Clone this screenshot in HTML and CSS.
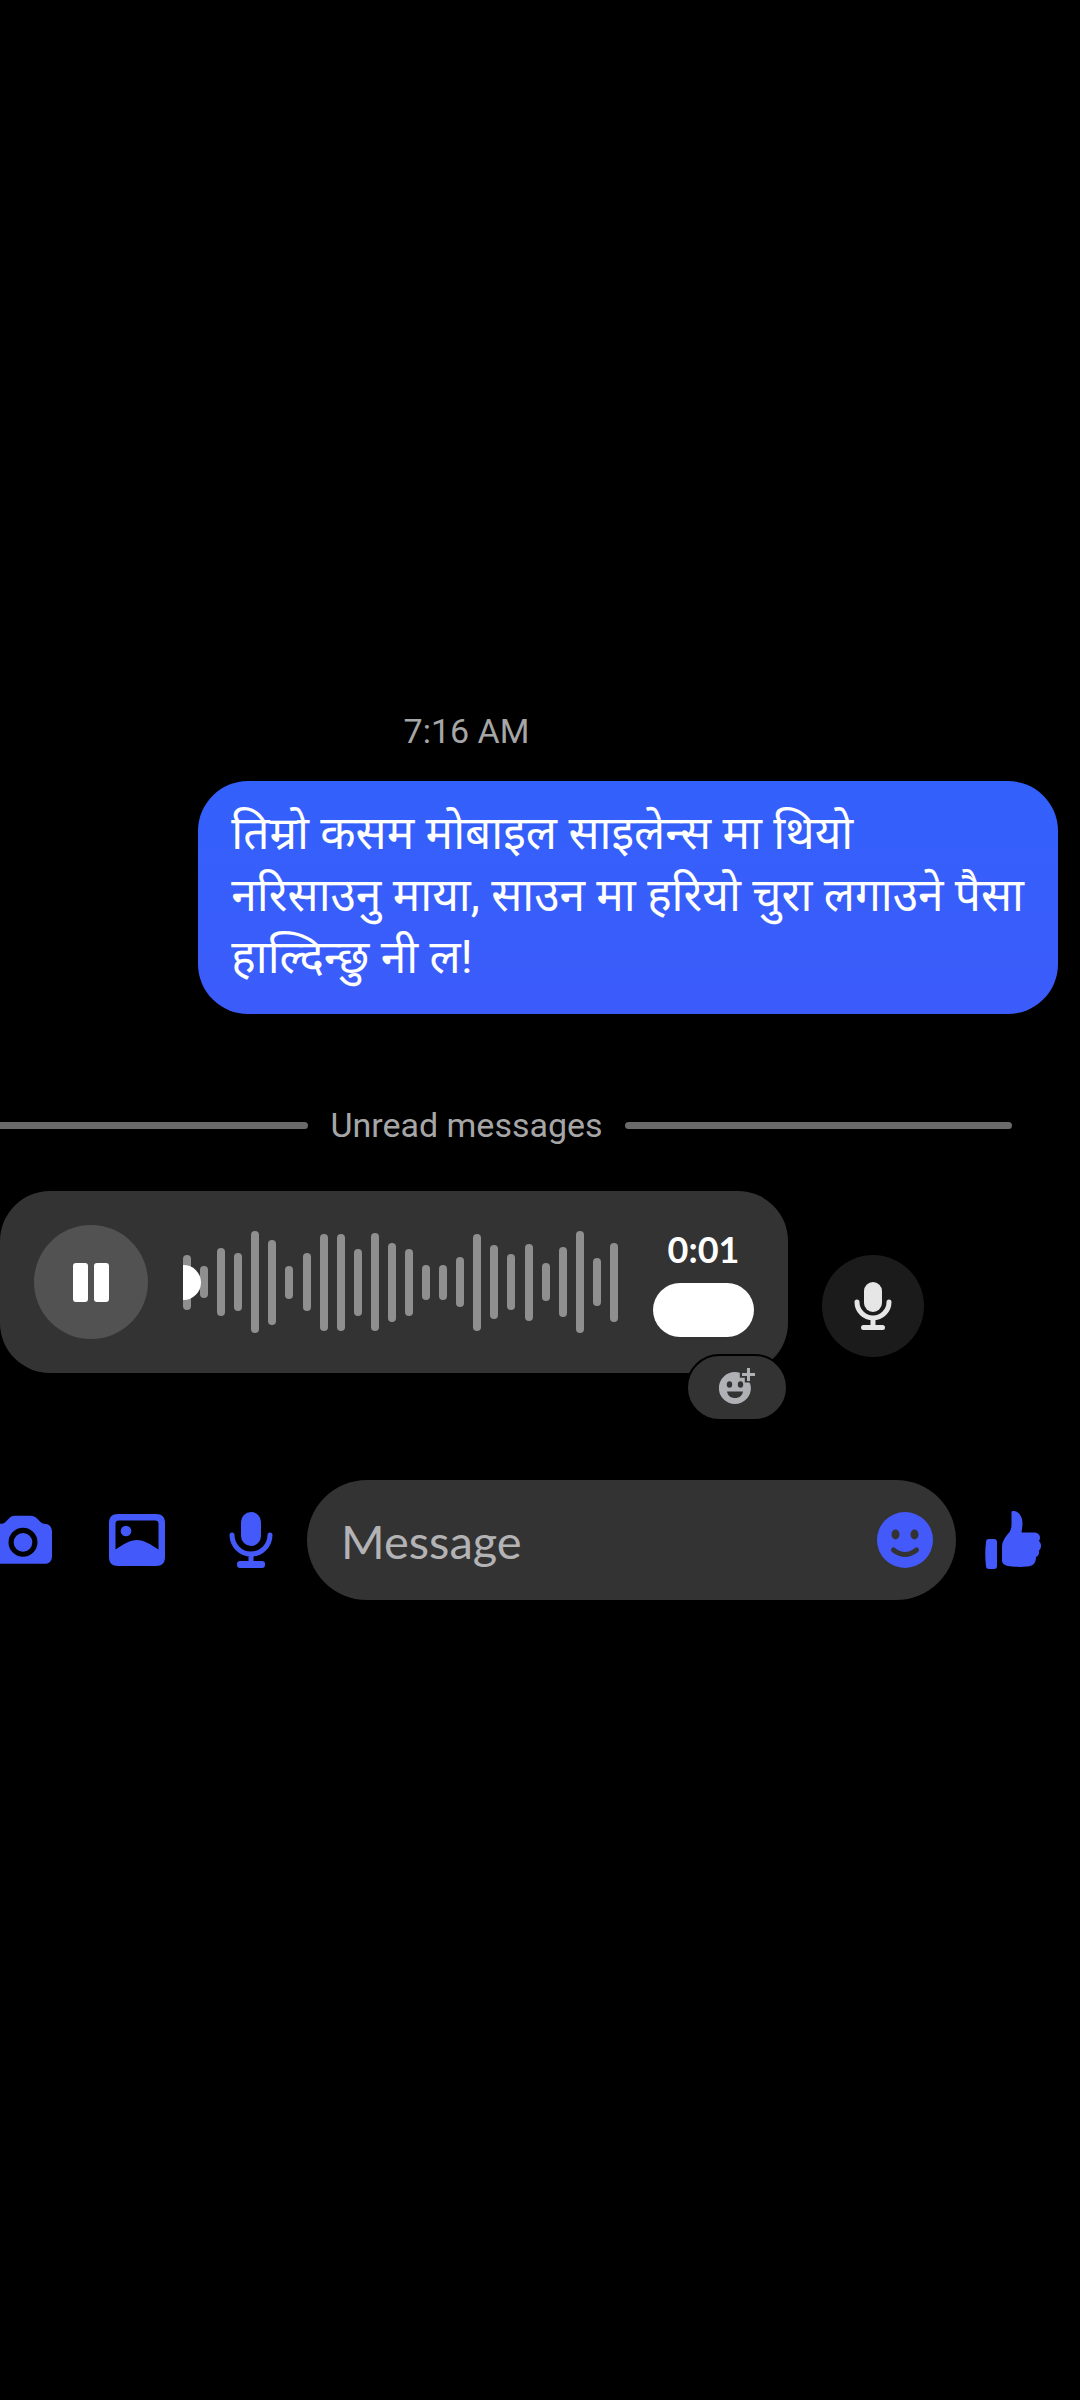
FILE: index.html
```html
<!DOCTYPE html>
<html lang="ne">
<head>
<meta charset="utf-8">
<meta name="viewport" content="width=device-width, initial-scale=1">
<title>Chat</title>
<link rel="stylesheet" href="styles.css">
</head>
<body>
<main class="chat">
  <div class="thread">
    <time class="stamp">7:16 AM</time>
    <p class="bubble">तिम्रो कसम मोबाइल साइलेन्स मा थियो<br>नरिसाउनु माया, साउन मा हरियो चुरा लगाउने पैसा<br>हाल्दिन्छु नी ल!</p>
    <div class="divider"><span>Unread messages</span></div>

    <div class="voice-row">
      <div class="voice">
        <button class="pause" aria-label="Pause"><i></i><i></i></button>
        <div class="wave">
          <span class="thumb"></span>
          <i style="height:55px"></i><i style="height:32px"></i><i style="height:68px"></i><i style="height:58px"></i><i style="height:102px"></i><i style="height:85px"></i><i style="height:33px"></i><i style="height:58px"></i><i style="height:97px"></i><i style="height:97px"></i><i style="height:67px"></i><i style="height:98px"></i><i style="height:79px"></i><i style="height:67px"></i><i style="height:35px"></i><i style="height:35px"></i><i style="height:50px"></i><i style="height:97px"></i><i style="height:74px"></i><i style="height:56px"></i><i style="height:77px"></i><i style="height:38px"></i><i style="height:70px"></i><i style="height:102px"></i><i style="height:48px"></i><i style="height:79px"></i>
        </div>
        <div class="meta">
          <span class="duration">0:01</span>
          <button class="speed" aria-label="Playback speed"></button>
        </div>
        <button class="react" aria-label="Add reaction">
          <svg width="36" height="36" viewBox="0 0 36 36">
            <path fill="#b0b1b5" d="M16 4c1.700 0 3.300.3 4.800.8v5h5v4.600h4.700c.9 1.800 1.400 3.600 1.400 5.600a16 16 0 1 1-15.900-16z"/>
            <path fill="none" stroke="#b0b1b5" stroke-width="3" d="M29.500 0v13M23 6.500h13"/>
            <g fill="#333"><ellipse cx="10.500" cy="16.500" rx="2.700" ry="3.200"/><ellipse cx="21.500" cy="16.500" rx="2.700" ry="3.200"/><path d="M8 23.500h16c-.8 4.500-4 6.500-8 6.500s-7.200-2-8-6.500z"/></g>
          </svg>
        </button>
      </div>
      <button class="transcribe" aria-label="Reply with voice">
        <svg width="38" height="48" viewBox="0 0 38 48" fill="#e6e6e6">
          <rect x="10" y="0" width="18" height="30" rx="9"/>
          <path d="M3 20a16 16 0 0 0 32 0M19 36v8M9.500 45.500h19" fill="none" stroke="#e6e6e6" stroke-width="5" stroke-linecap="round"/>
        </svg>
      </button>
    </div>
  </div>

  <form class="composer">
    <button type="button" class="tool" aria-label="Camera">
      <svg width="62" height="52" viewBox="0 0 62 52">
        <path fill="#4459fa" fill-rule="evenodd" d="M22 0h17c3 0 5 1 7 3l4 4c1 1 2 1.500 3.500 1.500 5 0 8.500 3.500 8.500 8.500v26c0 5.500-3 8.500-8.500 8.500h-45C3 51.500 0 48.500 0 43V17c0-5 3.500-8.500 8.500-8.500 1.500 0 2.500-.5 3.500-1.500l4-4c2-2 3-3 6-3zM31 13a15.500 15.500 0 1 0 0 31 15.500 15.500 0 0 0 0-31zm0 5.500a10 10 0 1 1 0 20 10 10 0 0 1 0-20z"/>
      </svg>
    </button>
    <button type="button" class="tool" aria-label="Gallery">
      <svg width="56" height="52" viewBox="0 0 56 52">
        <path fill="#4459fa" fill-rule="evenodd" d="M9 0h38c6 0 9 3 9 9v34c0 6-3 9-9 9H9c-6 0-9-3-9-9V9c0-6 3-9 9-9zm1 6.500c-2.500 0-3.500 1-3.500 3.500v25.500C15 30 21 26 28 26s14 4.500 21.500 9.500V10c0-2.500-1-3.500-3.500-3.500z"/>
        <circle cx="17" cy="17" r="5.300" fill="#4459fa"/>
      </svg>
    </button>
    <button type="button" class="tool" aria-label="Record voice">
      <svg width="44" height="56" viewBox="0 0 44 56" fill="#4459fa">
        <rect x="12" y="0" width="20" height="34" rx="10"/>
        <path d="M3 23a19 19 0 0 0 38 0M22 42v8" fill="none" stroke="#4459fa" stroke-width="5" stroke-linecap="round"/>
        <rect x="8" y="49" width="28" height="7" rx="3"/>
      </svg>
    </button>
    <div class="field">
      <input type="text" placeholder="Message" aria-label="Message">
      <button type="button" class="tool" aria-label="Emoji">
        <svg width="56" height="56" viewBox="0 0 56 56">
          <circle cx="28" cy="28" r="28" fill="#4459fa"/>
          <ellipse cx="18.500" cy="22.500" rx="4" ry="5" fill="#333"/><ellipse cx="37.500" cy="22.500" rx="4" ry="5" fill="#333"/>
          <path d="M16.500 38q11.500 9 23 0" fill="none" stroke="#333" stroke-width="5" stroke-linecap="round"/>
        </svg>
      </button>
    </div>
    <button type="button" class="tool" aria-label="Like">
      <svg width="56" height="58" viewBox="0 0 56 58" fill="#4459fa">
        <path d="M4 28h5c2 0 3 1 3 3v24c0 2-1 3-3 3H4c-2 0-3-1-3-3C0 47 0 39 1 31c0-2 1-3 3-3z"/>
        <path d="M26.500 1c0-1 1-1 2-1 5 0 9 5 9 12 0 3-.5 6-1 9.500h12c4 0 6.500 2 6.500 5 0 1.500-.5 2.500-1 3.500 1.500 1.500 2 3 2 5s-1 3.500-2 4.500c.5 3-.5 5.500-3 6.500 0 6-3 9.500-9 9.500-5 .5-10 .5-15 0-6-.5-10-2-10-6V36c0-5 2-8 5-12 3-3 4.500-6 4.500-10z"/>
      </svg>
    </button>
  </form>
</main>
</body>
</html>
```
FILE: styles.css
```css
* { box-sizing: border-box; }

body {
  margin: 0;
  background: #000;
  color: #fff;
  font-family: Roboto, "Noto Sans", "Noto Sans Devanagari", sans-serif;
}

button {
  display: flex;
  align-items: center;
  justify-content: center;
  flex: none;
  padding: 0;
  border: 0;
  background: none;
}

.chat {
  min-height: 100vh;
  padding-top: 711px;
  overflow: hidden;
}

.thread {
  display: flex;
  flex-direction: column;
}

.stamp,
.divider {
  margin-left: -79px;
  margin-right: 68px;
  color: #a6a6a6;
  font-size: 34px;
  line-height: 40px;
  text-align: center;
}

.bubble {
  align-self: flex-end;
  margin: 30px 22px 0 0;
  padding: 21px 34px 26px 33px;
  border-radius: 50px;
  background: linear-gradient(#3360fb, #3c5cfa);
  font-size: 46px;
  line-height: 62px;
}

.divider {
  display: flex;
  align-items: center;
  gap: 22px;
  margin-top: 91px;
}

.divider::before,
.divider::after {
  content: "";
  flex: 1;
  height: 7px;
  border-radius: 4px;
  background: #6a6a6a;
}

.voice-row {
  display: flex;
  align-items: flex-end;
  gap: 34px;
  margin-top: 46px;
}

.voice {
  position: relative;
  display: flex;
  align-items: center;
  gap: 35px;
  padding: 34px;
  border-radius: 50px;
  background: #333;
}

.pause {
  gap: 6px;
  width: 114px;
  height: 114px;
  border-radius: 50%;
  background: #525252;
}

.pause i {
  width: 15px;
  height: 39px;
  border-radius: 3px;
  background: #fff;
}

.wave {
  position: relative;
  display: flex;
  align-items: center;
  justify-content: space-between;
  width: 435px;
}

.wave i {
  width: 8px;
  border-radius: 4px;
  background: #8f8f8f;
}

.thumb {
  position: absolute;
  left: 0;
  width: 18px;
  height: 35px;
  border-radius: 0 18px 18px 0;
  background: #fff;
}

.meta {
  display: flex;
  flex-direction: column;
  align-items: center;
  gap: 12px;
}

.duration {
  font: 700 36px/44px Lato, sans-serif;
}

.speed {
  width: 101px;
  height: 54px;
  border-radius: 27px;
  background: #fff;
}

.react {
  position: absolute;
  right: 0;
  bottom: -48px;
  width: 102px;
  height: 67px;
  border: 2px solid #000;
  border-radius: 34px;
  background: #333;
}

.react svg { margin-bottom: 4px; }

.transcribe {
  width: 102px;
  height: 102px;
  margin-bottom: 16px;
  border-radius: 50%;
  background: #1b1b1b;
}

.composer {
  display: flex;
  align-items: center;
  gap: 56px;
  margin: 107px 38px 0 -6px;
}

.tool {
  width: 58px;
  height: 58px;
}

.field {
  display: flex;
  align-items: center;
  flex: 1;
  min-width: 0;
  height: 120px;
  margin: 0 -28px 0 -29px;
  padding: 0 22px 0 34px;
  border-radius: 60px;
  background: #333;
}

.field input {
  flex: 1;
  min-width: 0;
  padding: 2px 0 0;
  border: 0;
  outline: 0;
  background: none;
  color: #fff;
  font: 47px/60px Lato, sans-serif;
}

.field input::placeholder { color: #b3b3b6; opacity: 1; }
```
